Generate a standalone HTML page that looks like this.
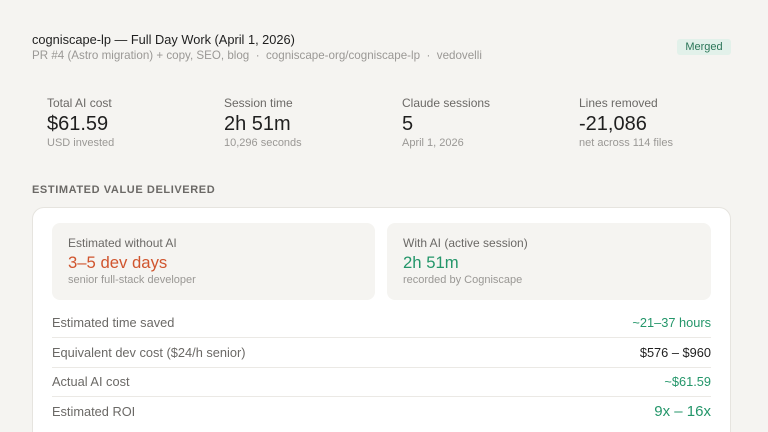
<!DOCTYPE html><html><head><meta charset="utf-8"><style>
*{margin:0;padding:0;box-sizing:border-box}
html,body{width:768px;height:432px;overflow:hidden}
body{background:#f5f4f1;font-family:"Liberation Sans",sans-serif;position:relative}
.a{position:absolute;white-space:nowrap}
.lab{font-size:12px;color:#6b6966}
.val{font-size:20px;color:#1f1f1f}
.sub{font-size:11px;color:#9a9895}
.row{position:absolute;left:52px;width:659px;height:29.5px;border-bottom:1px solid #ebe9e5;font-size:12.8px;color:#6b6966;display:flex;justify-content:space-between;align-items:center}
</style></head><body>
<div class="a" style="left:32px;top:32px;font-size:12.8px;color:#1f1f1f">cogniscape-lp — Full Day Work (April 1, 2026)</div>
<div class="a" style="left:32px;top:49px;font-size:11.6px;color:#9a9895">PR #4 (Astro migration) + copy, SEO, blog &nbsp;·&nbsp; cogniscape-org/cogniscape-lp &nbsp;·&nbsp; vedovelli</div>
<div class="a" style="left:677px;top:39px;width:54px;height:16px;background:#e2f1ea;border-radius:3px;color:#2b7658;font-size:11px;text-align:center;line-height:16px">Merged</div>

<div class="a lab" style="left:47px;top:96px">Total AI cost</div>
<div class="a val" style="left:47px;top:113px">$61.59</div>
<div class="a sub" style="left:47px;top:137px">USD invested</div>
<div class="a lab" style="left:224px;top:96px">Session time</div>
<div class="a val" style="left:224px;top:113px">2h 51m</div>
<div class="a sub" style="left:224px;top:137px">10,296 seconds</div>
<div class="a lab" style="left:402px;top:96px">Claude sessions</div>
<div class="a val" style="left:402px;top:113px">5</div>
<div class="a sub" style="left:402px;top:137px">April 1, 2026</div>
<div class="a lab" style="left:579px;top:96px">Lines removed</div>
<div class="a val" style="left:579px;top:113px">-21,086</div>
<div class="a sub" style="left:579px;top:137px">net across 114 files</div>

<div class="a" style="left:32px;top:184px;font-size:11px;font-weight:bold;color:#6b6966;letter-spacing:0.6px">ESTIMATED VALUE DELIVERED</div>

<div class="a" style="left:32px;top:207px;width:699px;height:240px;background:#fff;border:1px solid #e6e4df;border-radius:12px"></div>
<div class="a" style="left:52px;top:223px;width:323px;height:77px;background:#f5f4f1;border-radius:8px"></div>
<div class="a" style="left:387px;top:223px;width:324px;height:77px;background:#f5f4f1;border-radius:8px"></div>
<div class="a lab" style="left:68px;top:236px">Estimated without AI</div>
<div class="a" style="left:68px;top:253px;font-size:16.7px;color:#d0552e">3–5 dev days</div>
<div class="a sub" style="left:68px;top:274px">senior full-stack developer</div>
<div class="a lab" style="left:403px;top:236px">With AI (active session)</div>
<div class="a" style="left:403px;top:253px;font-size:16.7px;color:#24966a">2h 51m</div>
<div class="a sub" style="left:403px;top:274px">recorded by Cogniscape</div>

<div class="row" style="top:308.5px"><span>Estimated time saved</span><span style="color:#24966a">~21–37 hours</span></div>
<div class="row" style="top:338px"><span>Equivalent dev cost ($24/h senior)</span><span style="color:#1f1f1f">$576 – $960</span></div>
<div class="row" style="top:367px"><span>Actual AI cost</span><span style="color:#24966a">~$61.59</span></div>
<div class="row" style="top:396.5px;border-bottom:none"><span>Estimated ROI</span><span style="color:#24966a;font-size:15px">9x – 16x</span></div>
</body></html>
